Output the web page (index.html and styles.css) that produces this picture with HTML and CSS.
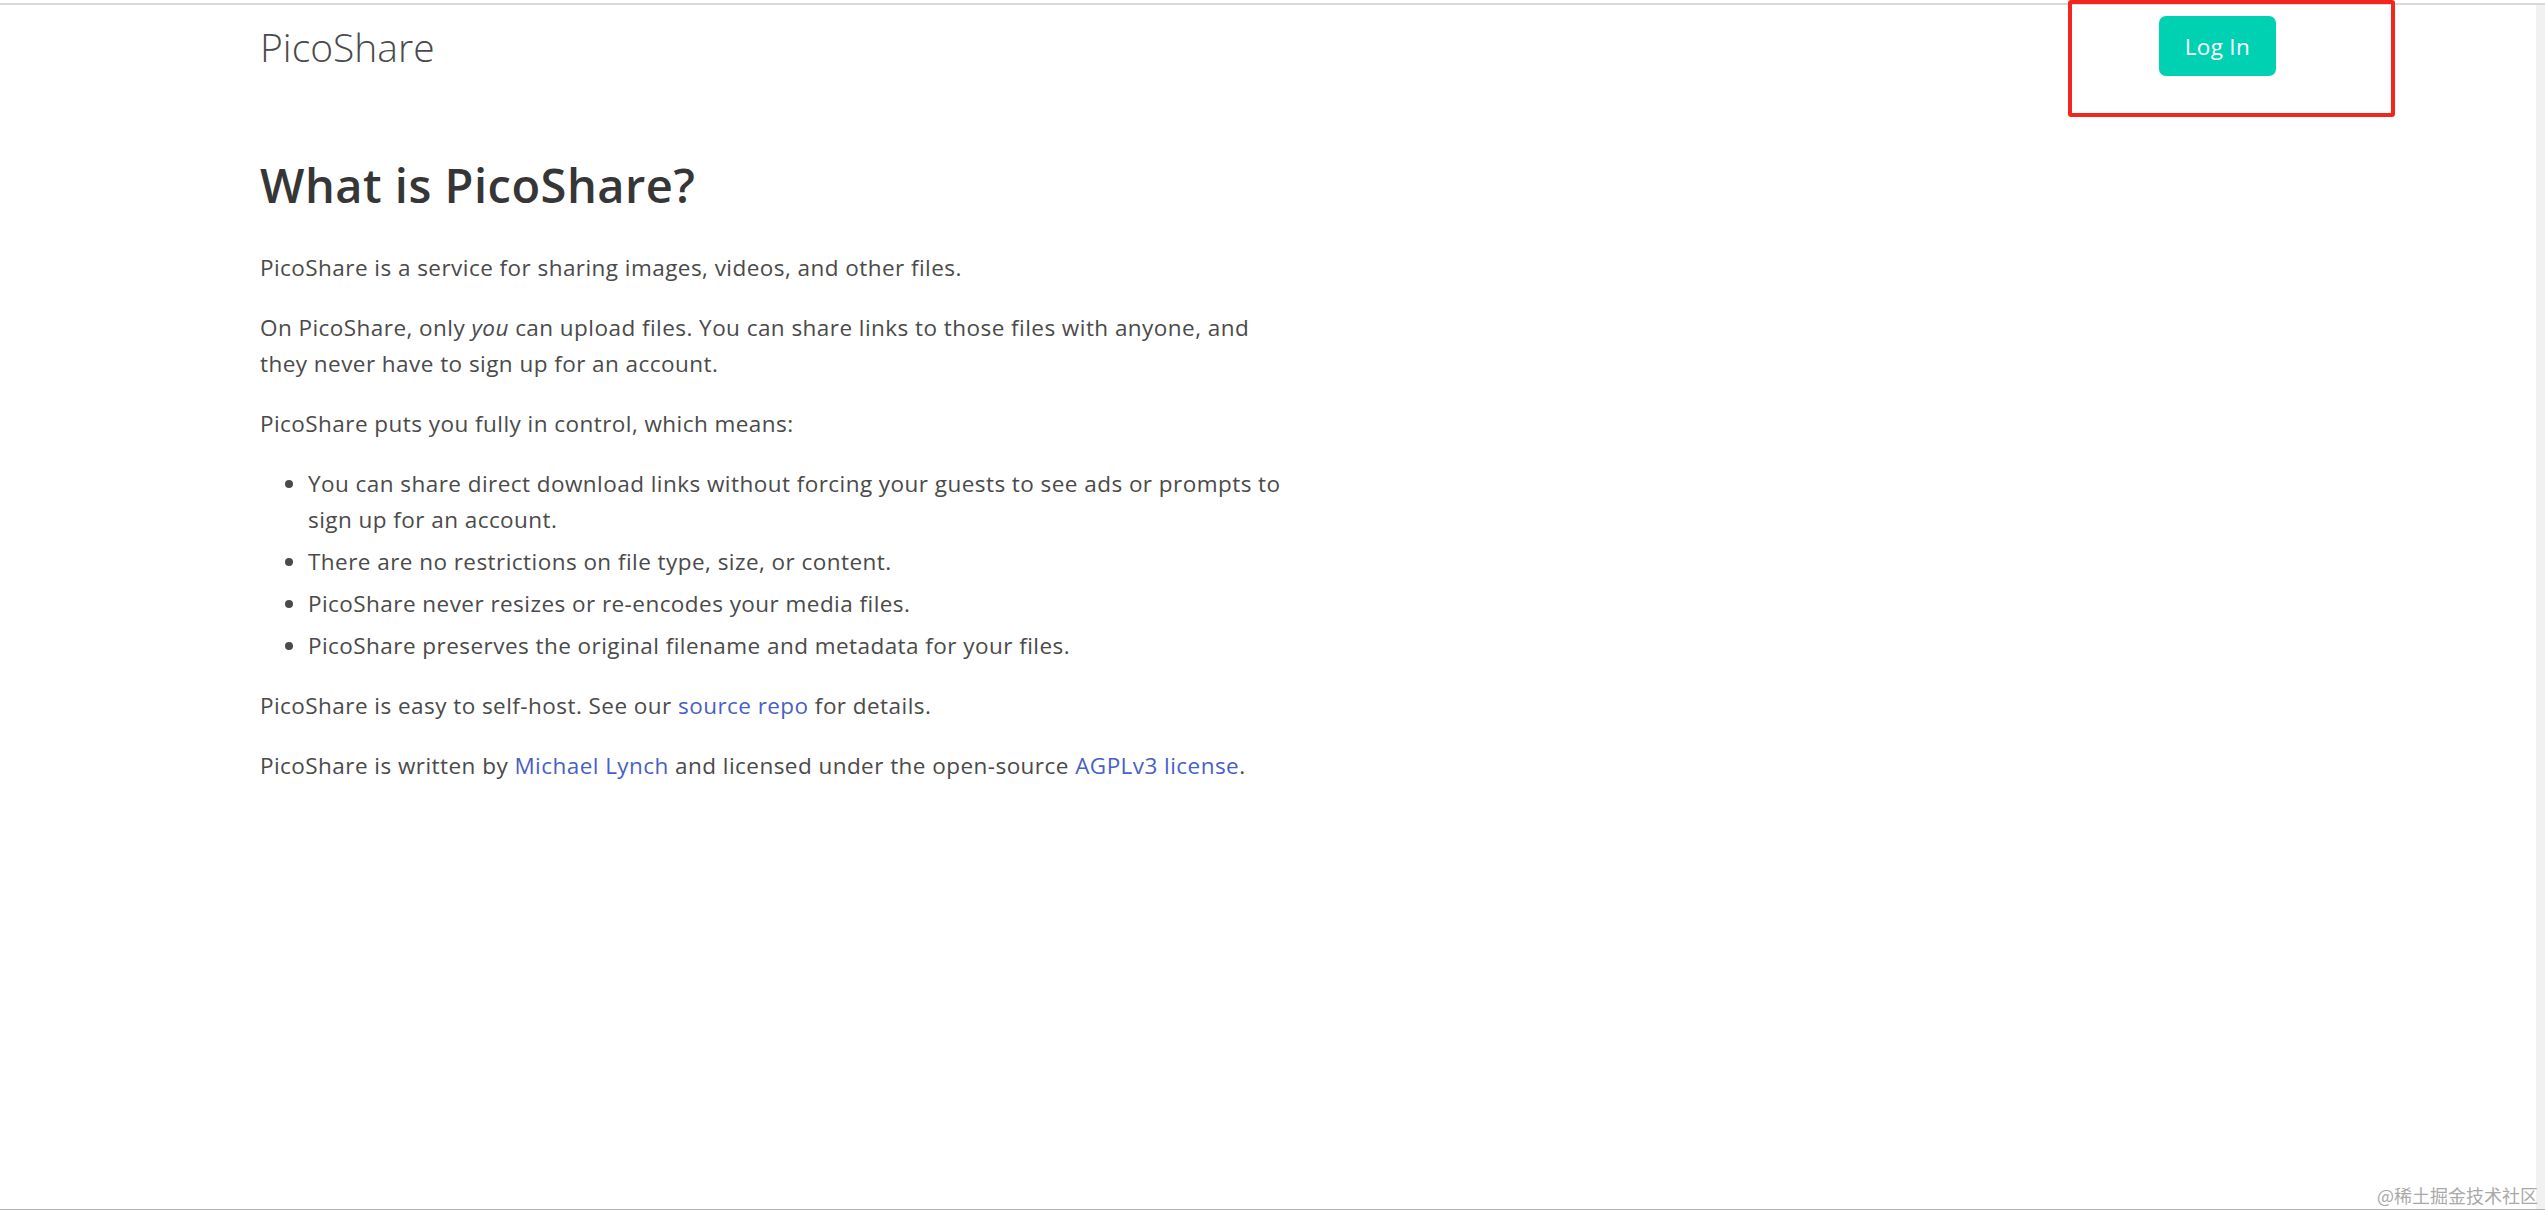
FILE: index.html
```html
<!DOCTYPE html>
<html>
	<head>
		<meta charset="utf-8">
		<title>PicoShare</title>
		<link rel="stylesheet" href="styles.css">
	</head>
	<body>
		<div class="window">
			<div class="page">
				<div class="container">
					<nav class="navbar">
						<a class="brand" href="#">PicoShare</a>
						<a class="button" href="#">Log In</a>
					</nav>
					<section class="content">
						<h1>What is PicoShare?</h1>
						<p>PicoShare is a service for sharing images, videos, and other files.</p>
						<p>On PicoShare, only <em>you</em> can upload files. You can share links to those files with anyone, and they never have to sign up for an account.</p>
						<p>PicoShare puts you fully in control, which means:</p>
						<ul>
							<li>You can share direct download links without forcing your guests to see ads or prompts to sign up for an account.</li>
							<li>There are no restrictions on file type, size, or content.</li>
							<li>PicoShare never resizes or re-encodes your media files.</li>
							<li>PicoShare preserves the original filename and metadata for your files.</li>
						</ul>
						<p>PicoShare is easy to self-host. See our <a href="#">source repo</a> for details.</p>
						<p>PicoShare is written by <a href="#">Michael Lynch</a> and licensed under the open-source <a href="#">AGPLv3 license</a>.</p>
					</section>
				</div>
			</div>
			<div class="scrollbar"></div>
		</div>
		<!-- 截图上的标注框和水印 -->
		<div class="mark"></div>
		<div class="watermark">@稀土掘金技术社区</div>
	</body>
</html>
```
FILE: styles.css
```css
*{
	margin: 0;
	padding: 0;
	box-sizing: border-box;
}
body{
	padding-top: 3px;
	background: #fff;
	font-family: "Open Sans", "Noto Sans", sans-serif;
	color: #4a4a4a;
	position: relative;
	height: 1210px;
	overflow: hidden;
}
.window{
	display: flex;
	height: 1207px;
	border-top: 2px solid #d9d9d9;
	border-bottom: 1px solid #b4b4b4;
}
.page{
	flex: 1;
}
.scrollbar{
	width: 9px;
	background: #f1f1f1;
}
.container{
	width: 2016px;
	margin: 0 auto;
}
.navbar{
	height: 82px;
	display: flex;
	align-items: center;
	justify-content: space-between;
}
.navbar .brand{
	font-size: 39px;
	font-weight: 300;
	line-height: 1;
	color: #4a4a4a;
	text-decoration: none;
}
.navbar .button{
	height: 60px;
	padding: 0 26px;
	display: flex;
	align-items: center;
	background: #00d1b2;
	border-radius: 7px;
	color: #fff;
	font-size: 22.5px;
	letter-spacing: 0.3px;
	text-decoration: none;
}
.content{
	padding-top: 72px;
	width: 1036px;
	font-size: 22.5px;
	letter-spacing: 0.45px;
	line-height: 36px;
}
.content h1{
	font-size: 47px;
	font-weight: 600;
	letter-spacing: 0.5px;
	line-height: 53px;
	color: #363636;
	margin-bottom: 38px;
}
.content p{
	margin-bottom: 24px;
}
.content ul{
	padding-left: 48px;
	margin-bottom: 24px;
}
.content li + li{
	margin-top: 6px;
}
.content a{
	color: #485fc7;
	text-decoration: none;
}
.mark{
	position: absolute;
	left: 2068px;
	top: 0;
	width: 327px;
	height: 117px;
	border: 4px solid #f2261c;
	border-radius: 3px;
}
.watermark{
	position: absolute;
	right: 7px;
	bottom: 6px;
	font-family: "Noto Sans CJK SC", sans-serif;
	font-size: 18px;
	line-height: 1;
	color: #a9a9a9;
}
```
